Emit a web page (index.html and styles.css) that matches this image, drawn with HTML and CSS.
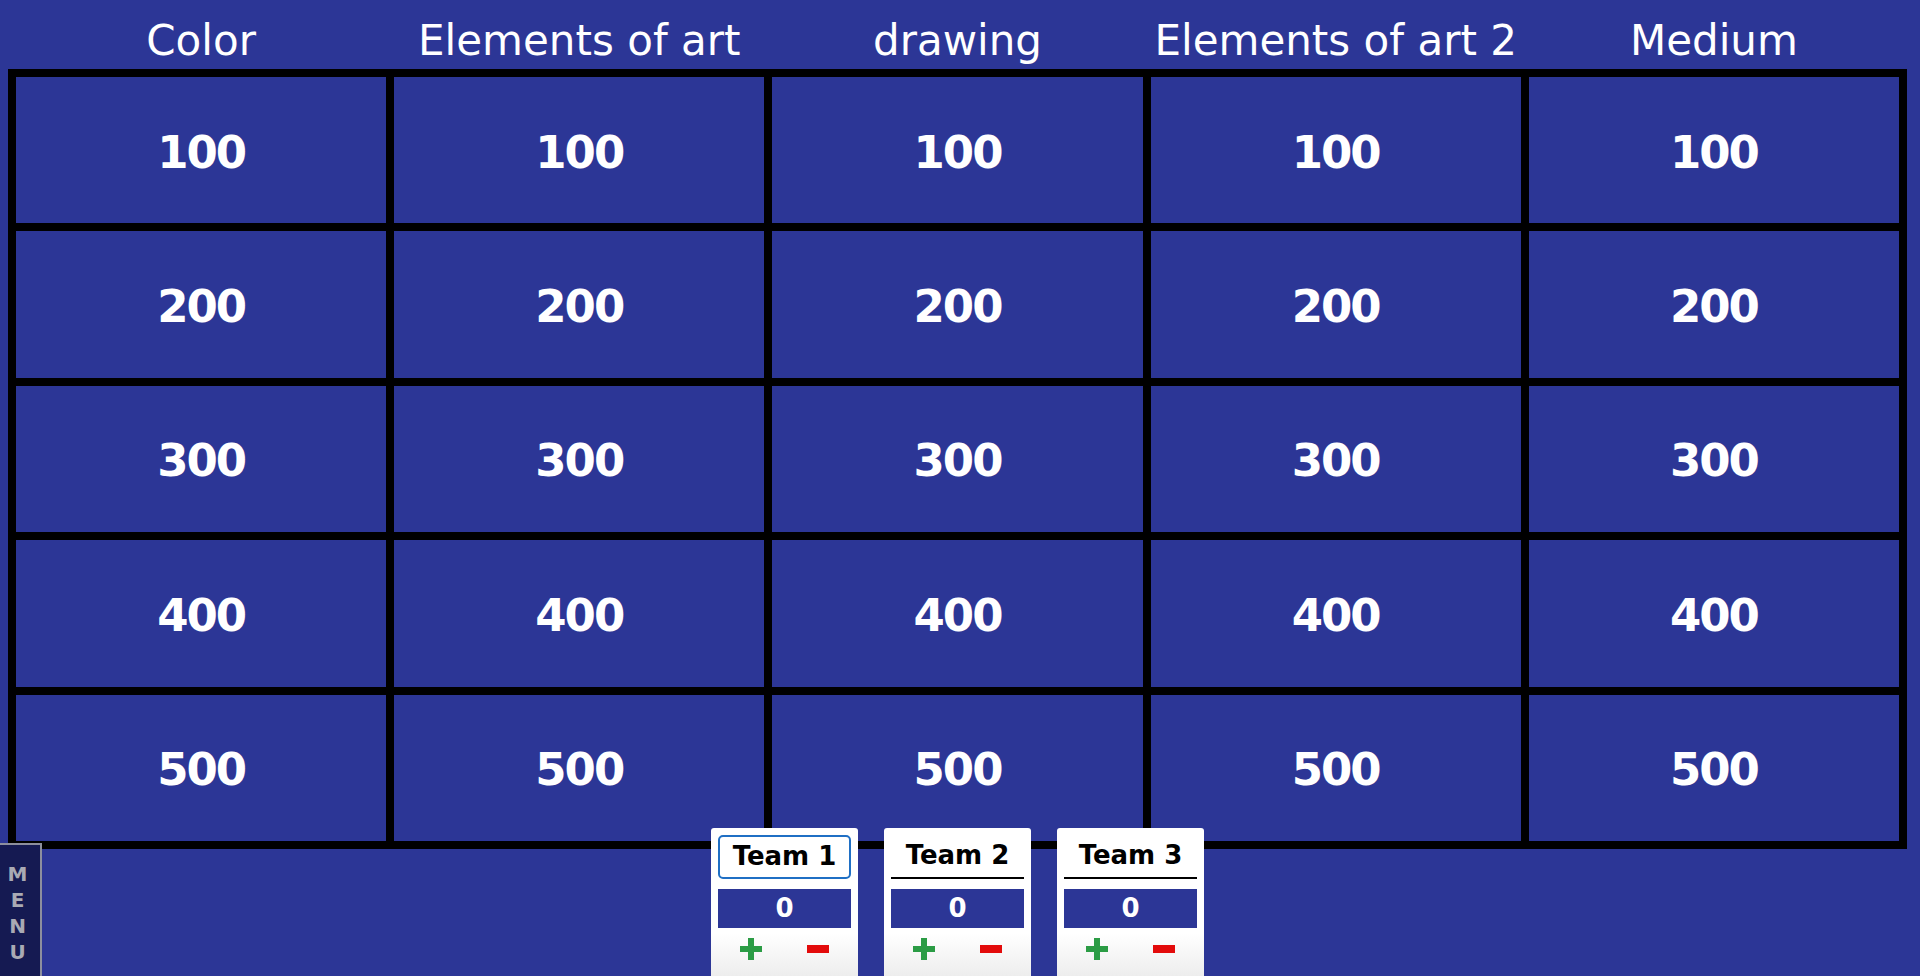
FILE: index.html
```html
<!DOCTYPE html>
<html lang="en">
<head>
<meta charset="utf-8">
<title>Jeopardy Board</title>
<link rel="stylesheet" href="styles.css">
</head>
<body>
<div class="page">
  <div class="categories">
    <div class="cat">Color</div>
    <div class="cat">Elements of art</div>
    <div class="cat">drawing</div>
    <div class="cat">Elements of art 2</div>
    <div class="cat">Medium</div>
  </div>
  <div class="board">
    <div class="cell">100</div><div class="cell">100</div><div class="cell">100</div><div class="cell">100</div><div class="cell">100</div>
    <div class="cell">200</div><div class="cell">200</div><div class="cell">200</div><div class="cell">200</div><div class="cell">200</div>
    <div class="cell">300</div><div class="cell">300</div><div class="cell">300</div><div class="cell">300</div><div class="cell">300</div>
    <div class="cell">400</div><div class="cell">400</div><div class="cell">400</div><div class="cell">400</div><div class="cell">400</div>
    <div class="cell">500</div><div class="cell">500</div><div class="cell">500</div><div class="cell">500</div><div class="cell">500</div>
  </div>
  <div class="teams">
    <div class="team">
      <div class="team-name focused">Team 1</div>
      <div class="score">0</div>
      <div class="controls">
        <svg class="btn" width="22" height="22" viewBox="0 0 22 22"><path d="M8 0h6v8h8v6h-8v8H8v-8H0V8h8z" fill="#2b9c45"/></svg>
        <svg class="btn" width="22" height="22" viewBox="0 0 22 22"><rect x="0" y="7" width="22" height="8" fill="#e30b0b"/></svg>
      </div>
    </div>
    <div class="team">
      <div class="team-name">Team 2</div>
      <div class="score">0</div>
      <div class="controls">
        <svg class="btn" width="22" height="22" viewBox="0 0 22 22"><path d="M8 0h6v8h8v6h-8v8H8v-8H0V8h8z" fill="#2b9c45"/></svg>
        <svg class="btn" width="22" height="22" viewBox="0 0 22 22"><rect x="0" y="7" width="22" height="8" fill="#e30b0b"/></svg>
      </div>
    </div>
    <div class="team">
      <div class="team-name">Team 3</div>
      <div class="score">0</div>
      <div class="controls">
        <svg class="btn" width="22" height="22" viewBox="0 0 22 22"><path d="M8 0h6v8h8v6h-8v8H8v-8H0V8h8z" fill="#2b9c45"/></svg>
        <svg class="btn" width="22" height="22" viewBox="0 0 22 22"><rect x="0" y="7" width="22" height="8" fill="#e30b0b"/></svg>
      </div>
    </div>
  </div>
</div>
<div class="menu-tab"><span>M</span><span>E</span><span>N</span><span>U</span></div>
</body>
</html>
```
FILE: styles.css
```css
html, body {
  margin: 0;
  padding: 0;
}
body {
  width: 1920px;
  height: 976px;
  overflow: hidden;
  background: #2c3696;
  font-family: "DejaVu Sans", Verdana, sans-serif;
  color: #fff;
}
.page {
  display: flex;
  flex-direction: column;
}
.categories {
  margin-left: 8px;
  width: 1899px;
  height: 69px;
  box-sizing: border-box;
  padding: 16px 8px 0;
  display: grid;
  grid-template-columns: repeat(5, 1fr);
  column-gap: 8px;
}
.cat {
  text-align: center;
  font-size: 42px;
  line-height: 49px;
  white-space: nowrap;
}
.board {
  margin-left: 8px;
  width: 1899px;
  height: 780px;
  box-sizing: border-box;
  padding: 8px;
  background: #000;
  display: grid;
  grid-template-columns: repeat(5, 1fr);
  grid-template-rows: repeat(5, 1fr);
  gap: 8px;
}
.cell {
  background: #2c3696;
  display: flex;
  align-items: center;
  justify-content: center;
  font-weight: bold;
  font-size: 45px;
  letter-spacing: -2px;
  padding-top: 4px;
}
.teams {
  margin-top: -21px;
  margin-left: 8px;
  width: 1899px;
  display: flex;
  justify-content: center;
  gap: 26px;
}
.team {
  width: 147px;
  height: 170px;
  box-sizing: border-box;
  padding: 7px 7px 0;
  background: linear-gradient(#ffffff 0%, #ffffff 62%, #e4e4e4 100%);
  border-radius: 3px 3px 0 0;
  display: flex;
  flex-direction: column;
}
.team-name {
  height: 44px;
  box-sizing: border-box;
  color: #000;
  font-weight: bold;
  font-size: 26px;
  line-height: 40px;
  text-align: center;
  border-bottom: 2px solid #000;
}
.team-name.focused {
  border: 2px solid #1f6fc4;
  border-radius: 5px;
  line-height: 38px;
}
.score {
  margin-top: 10px;
  height: 39px;
  background: #2c3696;
  color: #fff;
  font-weight: bold;
  font-size: 26px;
  line-height: 39px;
  text-align: center;
}
.controls {
  display: flex;
  gap: 45px;
  padding-left: 22px;
  margin-top: 10px;
}
.btn {
  display: block;
}
.menu-tab {
  position: fixed;
  left: 0;
  top: 843px;
  width: 40px;
  height: 140px;
  background: #151a52;
  border-top: 2px solid #8d8f9e;
  border-right: 2px solid #8d8f9e;
  display: flex;
  flex-direction: column;
  padding-top: 16px;
  color: #a9aab4;
  font-weight: bold;
  font-size: 20px;
  line-height: 26px;
}
.menu-tab span {
  width: 35px;
  text-align: center;
}
```
